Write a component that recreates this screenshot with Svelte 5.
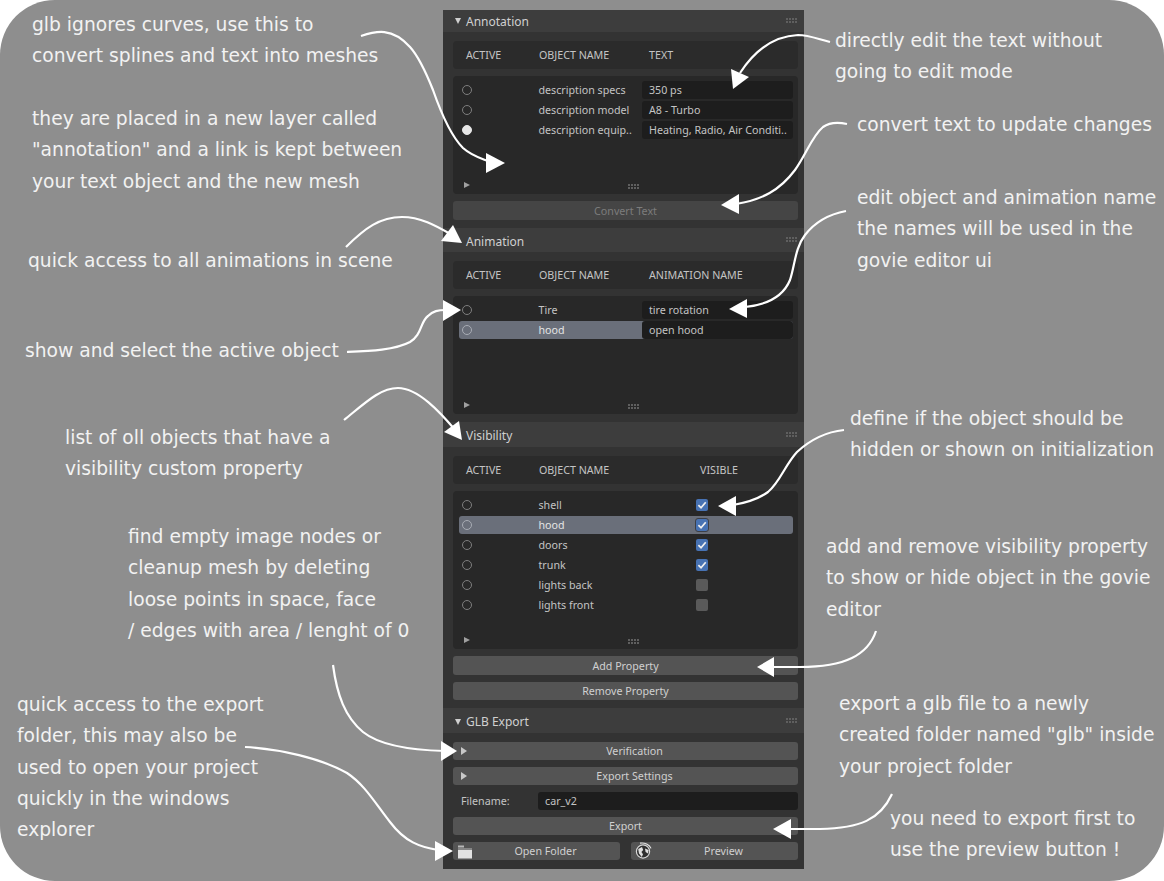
<script>
  const notes = [
    { x: 32, y: 11, lines: ['glb ignores curves, use this to', 'convert splines and text into meshes'] },
    { x: 32, y: 105, lines: ['they are placed in a new layer called', '"annotation" and a link is kept between', 'your text object and the new mesh'] },
    { x: 28, y: 247, lines: ['quick access to all animations in scene'] },
    { x: 25, y: 337, lines: ['show and select the active object'] },
    { x: 65, y: 424, lines: ['list of oll objects that have a', 'visibility custom property'] },
    { x: 128, y: 523, lines: ['find empty image nodes or', 'cleanup mesh by deleting', 'loose points in space, face', '/ edges with area / lenght of 0'] },
    { x: 17, y: 691, lines: ['quick access to the export', 'folder, this may also be', 'used to open your project', 'quickly in the windows', 'explorer'] },
    { x: 835, y: 27, lines: ['directly edit the text without', 'going to edit mode'] },
    { x: 857, y: 111, lines: ['convert text to update changes'] },
    { x: 857, y: 184, lines: ['edit object and animation name', 'the names will be used in the', 'govie editor ui'] },
    { x: 850, y: 405, lines: ['define if the object should be', 'hidden or shown on initialization'] },
    { x: 826, y: 533, lines: ['add and remove visibility property', 'to show or hide object in the govie', 'editor'] },
    { x: 839, y: 690, lines: ['export a glb file to a newly', 'created folder named "glb" inside', 'your project folder'] },
    { x: 890, y: 805, lines: ['you need to export first to', 'use the preview button !'] }
  ];
  const arrows = [
    { d: 'M361,36 C376,31 392,27 410,47 C420,58 427,75 433,90 C440,110 450,135 463,148 C472,156 480,158 488,161', h: '486,153 486,173 505,163' },
    { d: 'M346,247 C365,228 380,217 402,217 C420,217 435,225 452,235', h: '453,225 441,241 462,243' },
    { d: 'M347,352 C370,351 395,350 410,342 C422,335 420,322 428,316 C433,311 438,310 446,310', h: '443,300 443,321 461,310' },
    { d: 'M344,420 C365,403 380,388 398,388 C418,388 440,412 456,431', h: '459,421 444,432 462,440' },
    { d: 'M333,665 C337,695 345,717 363,732 C378,744 405,750 445,751', h: '441,741 441,761 457,751' },
    { d: 'M245,747 C280,749 320,758 347,773 C365,785 375,803 390,822 C405,842 420,847 438,850', h: '435,841 435,861 453,851' },
    { d: 'M830,42 C815,38 808,35 798,35 C775,36 755,50 740,73', h: '731,69 749,77 733,89' },
    { d: 'M847,124 C838,122 830,122 823,127 C812,136 806,155 795,170 C780,190 762,200 736,204', h: '721,205 739,194 739,214' },
    { d: 'M846,211 C830,214 815,222 805,235 C795,248 795,265 790,280 C783,297 765,305 745,307', h: '729,309 747,299 747,318' },
    { d: 'M844,430 C825,432 810,440 797,452 C785,465 780,482 768,492 C757,500 745,503 733,505', h: '718,506 736,496 736,516' },
    { d: 'M876,631 C868,655 845,667 800,667 L772,667', h: '757,667 774,657 774,677' },
    { d: 'M892,794 C880,820 860,828 820,829 L788,829', h: '773,829 791,819 791,839' }
  ];
  const annotation = [
    { name: 'description specs', value: '350 ps' },
    { name: 'description model', value: 'A8 - Turbo' },
    { name: 'description equip..', value: 'Heating, Radio, Air Conditi..', on: true }
  ];
  const animation = [
    { name: 'Tire', value: 'tire rotation' },
    { name: 'hood', value: 'open hood', sel: true }
  ];
  const visibility = [
    { name: 'shell', vis: true },
    { name: 'hood', vis: true, sel: true },
    { name: 'doors', vis: true },
    { name: 'trunk', vis: true },
    { name: 'lights back', vis: false },
    { name: 'lights front', vis: false }
  ];
</script>

{#snippet grip()}
  <svg class="grip" width="12" height="6" viewBox="0 0 12 6">
    {#each [0, 3, 6, 9] as x}
      {#each [0, 3] as y}
        <rect x={x} {y} width="2" height="2" fill="#5f5f5f" />
      {/each}
    {/each}
  </svg>
{/snippet}

{#snippet header(title, open, kind)}
  <div class="phead {kind}">
    {#if open}<span class="tri-down"></span>{/if}
    <span class="ptitle">{title}</span>
    {@render grip()}
  </div>
{/snippet}

{#snippet cols(c3, vis)}
  <div class="cols">
    <span class="c1">ACTIVE</span>
    <span class="c2">OBJECT NAME</span>
    <span class="c3" class:vis>{c3}</span>
  </div>
{/snippet}

{#snippet foot()}
  <div class="foot">
    <span class="tri-small"></span>
    {@render grip()}
  </div>
{/snippet}

{#snippet radio(on)}
  <span class="radio" class:on></span>
{/snippet}

<div class="page">
  <div class="canvas">
    <div class="panel">
      {@render header('Annotation', true, 'first')}
      <section class="body">
        {@render cols('TEXT', false)}
        <div class="list h118">
          <div class="rows">
            {#each annotation as r}
              <div class="row">
                {@render radio(r.on)}
                <span class="name">{r.name}</span>
                <span class="field">{r.value}</span>
              </div>
            {/each}
          </div>
          {@render foot()}
        </div>
        <button class="btn off">Convert Text</button>
      </section>

      {@render header('Animation', false, 'short')}
      <section class="body">
        {@render cols('ANIMATION NAME', false)}
        <div class="list h118">
          <div class="rows">
            {#each animation as r}
              <div class="row" class:sel={r.sel}>
                {@render radio(false)}
                <span class="name">{r.name}</span>
                <span class="field">{r.value}</span>
              </div>
            {/each}
          </div>
          {@render foot()}
        </div>
      </section>

      {@render header('Visibility', false, '')}
      <section class="body">
        {@render cols('VISIBLE', true)}
        <div class="list h158">
          <div class="rows">
            {#each visibility as r}
              <div class="row" class:sel={r.sel}>
                {@render radio(false)}
                <span class="name">{r.name}</span>
                <span class="check" class:vis={r.vis}>
                  {#if r.vis}
                    <svg width="12" height="12" viewBox="0 0 12 12"><path d="M2.4 6.2 L5 8.8 L9.7 3.2" fill="none" stroke="#f0f0f0" stroke-width="1.7" /></svg>
                  {/if}
                </span>
              </div>
            {/each}
          </div>
          {@render foot()}
        </div>
        <button class="btn">Add Property</button>
        <button class="btn h18">Remove Property</button>
      </section>

      {@render header('GLB Export', true, '')}
      <section class="body">
        <button class="btn h18 sub"><span class="tri-right"></span>Verification</button>
        <button class="btn h18 sub"><span class="tri-right"></span>Export Settings</button>
        <div class="fname">
          <span class="flabel">Filename:</span>
          <span class="finput">car_v2</span>
        </div>
        <button class="btn h18">Export</button>
        <div class="pair">
          <button class="btn h18 icon">
            <svg class="ico" width="16" height="14" viewBox="0 0 16 14">
              <path d="M1 0.5 H7 V2.5 H1 Z" fill="#b8b8b8" />
              <path d="M1 3.5 H15 V4.5 H1 Z" fill="#b8b8b8" />
              <path d="M1 5 H15 V13.5 H1 Z" fill="#e2e2e2" />
            </svg>
            Open Folder
          </button>
          <button class="btn h18 icon">
            <svg class="ico globe" width="18" height="18" viewBox="0 0 18 18">
              <circle cx="9" cy="9.5" r="6.6" fill="#303030" stroke="#d8d8d8" stroke-width="1.2" />
              <path d="M4.2 7 L8 5 L9.2 8 L7.4 10 L9 12.2 L7.8 15 L5 11.4 Z" fill="#e0e0e0" />
              <path d="M11 6.6 L14.6 8 L14 11.4 L11.6 10 Z" fill="#e0e0e0" />
              <path d="M6 1.2 C10.5 0.4 15.5 2.4 17 6.4" fill="none" stroke="#e4e4e4" stroke-width="1.2" />
            </svg>
            Preview
          </button>
        </div>
      </section>
    </div>

    {#each notes as n}
      <div class="note" style="left:{n.x}px;top:{n.y}px">
        {#each n.lines as l}<div class="line">{l}</div>{/each}
      </div>
    {/each}

    <svg class="arrows" width="1164" height="881" viewBox="0 0 1164 881">
      {#each arrows as a}
        <path d={a.d} fill="none" stroke="#fff" stroke-width="2.2" stroke-linecap="butt" />
        <polygon points={a.h} fill="#fff" />
      {/each}
    </svg>
  </div>
</div>

<style>
  :global(body) { margin: 0; background: #fff; }
  .page { width: 1164px; height: 881px; position: relative; overflow: hidden; background: #fff; }
  .canvas {
    width: 100%; height: 100%; background: #8e8e8e; border-radius: 55px;
    padding: 10px 0 0 443px; box-sizing: border-box; position: relative;
    font-family: "Noto Sans", "DejaVu Sans", sans-serif;
  }
  .panel { width: 361px; height: 859px; background: #333; box-sizing: border-box; overflow: hidden; color: #c4c4c4; font-size: 10.7px; }
  .phead { height: 25px; background: #3d3d3d; display: flex; align-items: center; padding: 2px 5px 0 12px; position: relative; box-sizing: border-box; margin-top: 8px; }
  .phead.first { height: 22px; margin-top: 0; padding-top: 0; }
  .phead.short { height: 24px; }
  .ptitle { font-size: 12px; color: #d0d0d0; position: absolute; left: 23px; }
  .grip { position: absolute; right: 6px; top: 50%; transform: translateY(-50%); }
  .tri-down { width: 0; height: 0; border-left: 3px solid transparent; border-right: 3px solid transparent; border-top: 6px solid #d0d0d0; }
  .body { padding: 9px 6px 0 10px; display: flex; flex-direction: column; gap: 7px; }
  .cols { height: 28px; background: #2b2b2b; border-radius: 4px; position: relative; display: flex; align-items: center; box-sizing: border-box; }
  .c1 { position: absolute; left: 13px; }
  .c2 { position: absolute; left: 86px; }
  .c3 { position: absolute; left: 196px; }
  .c3.vis { left: 247px; }
  .list { background: #282828; border-radius: 4px; box-sizing: border-box; padding: 5px 5px 0 6px; display: flex; flex-direction: column; }
  .h118 { height: 118px; }
  .h158 { height: 158px; }
  .rows { flex: 1; display: flex; flex-direction: column; gap: 2px; }
  .row { height: 18px; display: grid; grid-template-columns: 79.5px 103.5px 1fr; align-items: center; border-radius: 3px; position: relative; }
  .row.sel { background: #6a6f7a; color: #e4e4e4; }
  .name { grid-column: 2; }
  .radio { width: 8px; height: 8px; border-radius: 50%; border: 1.5px solid #7e7e7e; box-sizing: content-box; margin-left: 3px; }
  .radio.on { background: #e6e6e6; border-color: #e6e6e6; }
  .row.sel .radio { border-color: #a8acb4; }
  .field { grid-column: 3; height: 18px; line-height: 18px; background: #1d1d1d; border-radius: 3px; padding-left: 7px; color: #c4c4c4; white-space: nowrap; overflow: hidden; }
  .check { grid-column: 3; width: 12px; height: 12px; border-radius: 2px; background: #5a5a5a; margin-left: 54px; display: flex; }
  .check.vis { background: #4772b3; }
  .row.sel .check { outline: 1px solid #3c3f46; }
  .foot { height: 17px; position: relative; margin: 0 -5px 0 -6px; flex: none; }
  .foot .grip { left: 175px; right: auto; top: 7px; transform: none; }
  .tri-small { position: absolute; left: 11px; top: 5px; width: 0; height: 0; border-top: 3px solid transparent; border-bottom: 3px solid transparent; border-left: 6px solid #a0a0a0; }
  .btn { height: 19px; padding: 0; border: 0; border-radius: 3px; background: #545454; color: #d0d0d0; font: inherit; font-size: 10.7px; display: block; width: 100%; position: relative; text-align: center; }
  .btn.h18 { height: 18px; }
  .btn.off { background: #454545; color: #7c7c7c; }
  .btn.sub { padding-left: 18px; }
  .tri-right { position: absolute; left: 8px; top: 5px; width: 0; height: 0; border-top: 4px solid transparent; border-bottom: 4px solid transparent; border-left: 6px solid #c8c8c8; }
  .fname { height: 18px; display: flex; align-items: center; }
  .flabel { width: 85px; padding-left: 8px; box-sizing: border-box; color: #c4c4c4; }
  .finput { flex: 1; height: 18px; line-height: 18px; background: #1d1d1d; border-radius: 3px; padding-left: 7px; color: #c4c4c4; }
  .pair { display: flex; gap: 11px; }
  .btn.icon { flex: 1; width: auto; padding-left: 18px; }
  .ico { position: absolute; left: 4px; top: 3px; }
  .ico.globe { left: 3px; top: 0; }
  .note { position: absolute; color: #f2f2f2; font-family: "DejaVu Sans", sans-serif; font-size: 18.7px; white-space: nowrap; }
  .line { height: 31.3px; line-height: 28px; }
  .arrows { position: absolute; inset: 0; pointer-events: none; }
</style>
